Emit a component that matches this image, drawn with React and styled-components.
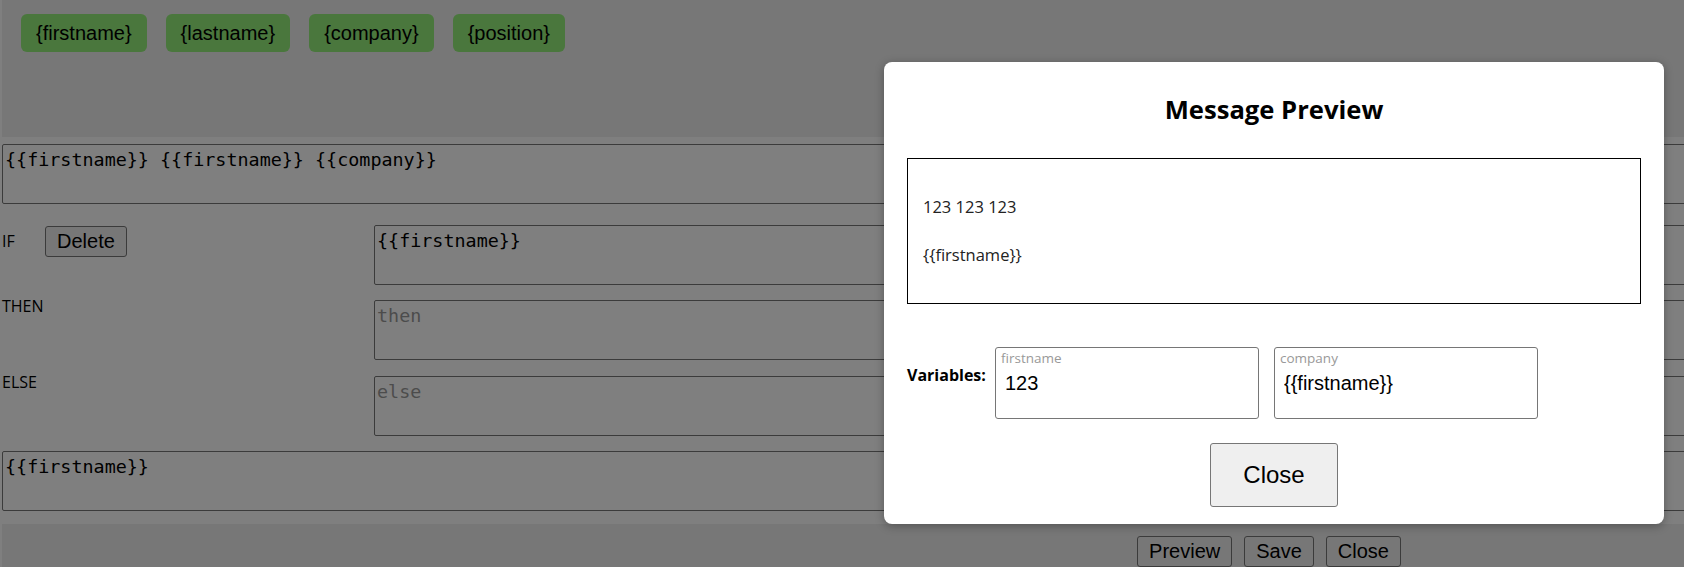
import React from "react";
import styled, { createGlobalStyle } from "styled-components";

const GlobalStyle = createGlobalStyle`
  html, body {
    margin: 0;
    padding: 0;
    overflow: hidden;
    background: #fff;
  }
  body {
    font-family: "Open Sans", "Noto Sans", sans-serif;
    font-size: 16px;
    color: #000;
  }
`;

const tags = ["firstname", "lastname", "company", "position"];

const App = () => {
  return (
    <>
      <GlobalStyle />
      <Page>
        <Header>
          {tags.map((tag) => (
            <Chip key={tag}>{`{${tag}}`}</Chip>
          ))}
        </Header>

        <Editor>
          <Field
            spellCheck={false}
            defaultValue="{{firstname}} {{firstname}} {{company}}"
          />

          <ConditionRow $gap={21}>
            <Side $center>
              <Label>IF</Label>
              <SmallBtn $lift>Delete</SmallBtn>
            </Side>
            <Field spellCheck={false} defaultValue="{{firstname}}" />
          </ConditionRow>

          <ConditionRow $gap={15}>
            <Side>
              <Label>THEN</Label>
            </Side>
            <Field spellCheck={false} placeholder="then" />
          </ConditionRow>

          <ConditionRow $gap={16}>
            <Side>
              <Label>ELSE</Label>
            </Side>
            <Field spellCheck={false} placeholder="else" />
          </ConditionRow>

          <Field
            spellCheck={false}
            defaultValue="{{firstname}}"
            style={{ marginTop: 15 }}
          />
        </Editor>

        <Footer>
          <SmallBtn>Preview</SmallBtn>
          <SmallBtn>Save</SmallBtn>
          <SmallBtn>Close</SmallBtn>
        </Footer>

        <Overlay>
          <Modal>
            <Title>Message Preview</Title>
            <PreviewBox>{"123 123 123\n\n{{firstname}}"}</PreviewBox>
            <VarRow>
              <VarLabel>Variables:</VarLabel>
              <VarField>
                <Caption>firstname</Caption>
                <VarInput spellCheck={false} defaultValue="123" />
              </VarField>
              <VarField>
                <Caption>company</Caption>
                <VarInput spellCheck={false} defaultValue="{{firstname}}" />
              </VarField>
            </VarRow>
            <CloseBtn>Close</CloseBtn>
          </Modal>
        </Overlay>
      </Page>
    </>
  );
};

const Page = styled.div`
  position: relative;
  width: 2546px;
  padding-left: 2px;
`;

const Header = styled.div`
  display: flex;
  align-items: flex-start;
  gap: 19px;
  height: 137px;
  box-sizing: border-box;
  padding: 14px 19px;
  background: #eeeeee;
`;

const Chip = styled.div`
  padding: 7px 15px;
  border-radius: 6px;
  background: #94ee7a;
  font-family: "Liberation Sans", Arial, sans-serif;
  font-size: 20px;
  line-height: 24px;
  color: #000;
`;

const Editor = styled.div`
  padding: 7px 0 13px;
  background: #fff;
`;

const Field = styled.textarea`
  display: block;
  width: 100%;
  height: 60px;
  box-sizing: border-box;
  margin: 0;
  padding: 2px;
  border: 1px solid #767676;
  border-radius: 2px;
  resize: none;
  outline: none;
  font-family: "DejaVu Sans Mono", "Liberation Mono", monospace;
  font-size: 18.4px;
  line-height: 26px;
  color: #000;
  background: #fff;

  &::placeholder {
    color: #999;
  }
`;

const ConditionRow = styled.div`
  display: grid;
  grid-template-columns: 372px 1fr;
  align-items: start;
  margin-top: ${(p) => p.$gap}px;
`;

const Side = styled.div`
  display: flex;
  align-items: ${(p) => (p.$center ? "center" : "flex-start")};
`;

const Label = styled.span`
  width: 43px;
  flex-shrink: 0;
  font-size: 16px;
  line-height: 12px;
`;

const SmallBtn = styled.button`
  margin-top: ${(p) => (p.$lift ? "1px" : "0")};
  padding: 3px 11px;
  border: 1px solid #767676;
  border-radius: 3px;
  background: #efefef;
  font-family: "Liberation Sans", Arial, sans-serif;
  font-size: 20px;
  line-height: 23px;
  color: #000;
`;

const Footer = styled.div`
  display: flex;
  justify-content: center;
  gap: 12px;
  padding: 12px 12px 24px 0;
  background: #eeeeee;
`;

const Overlay = styled.div`
  position: absolute;
  inset: 0;
  display: flex;
  justify-content: center;
  align-items: flex-start;
  padding-top: 62px;
  background: rgba(0, 0, 0, 0.5);
`;

const Modal = styled.div`
  display: flex;
  flex-direction: column;
  width: 780px;
  box-sizing: border-box;
  padding: 32px 23px 17px;
  border-radius: 8px;
  background: #fff;
  box-shadow: 0 2px 10px rgba(0, 0, 0, 0.3);
`;

const Title = styled.h2`
  margin: 0;
  text-align: center;
  font-size: 25.6px;
  font-weight: 700;
  line-height: 32px;
`;

const PreviewBox = styled.div`
  margin-top: 32px;
  padding: 36px 15px;
  border: 1px solid #000;
  white-space: pre-wrap;
  font-size: 16.5px;
  line-height: 24px;
  color: #222;
`;

const VarRow = styled.div`
  display: flex;
  align-items: center;
  margin-top: 43px;
`;

const VarLabel = styled.span`
  width: 88px;
  margin-bottom: 16px;
  font-size: 16px;
  font-weight: 700;
`;

const VarField = styled.label`
  display: flex;
  flex-direction: column;
  width: 264px;
  height: 72px;
  box-sizing: border-box;
  margin-right: 15px;
  padding: 2px 5px;
  border: 1px solid #767676;
  border-radius: 3px;
`;

const Caption = styled.span`
  font-size: 13.5px;
  line-height: 16px;
  color: #999;
`;

const VarInput = styled.input`
  margin-top: 5px;
  padding: 0 0 0 4px;
  border: none;
  outline: none;
  font-family: "Liberation Sans", Arial, sans-serif;
  font-size: 20px;
  line-height: 24px;
  height: 24px;
  color: #000;
  background: transparent;
`;

const CloseBtn = styled.button`
  align-self: center;
  margin-top: 24px;
  padding: 17px 32px;
  border: 1px solid #767676;
  border-radius: 3px;
  background: #efefef;
  font-family: "Liberation Sans", Arial, sans-serif;
  font-size: 24px;
  line-height: 28px;
  color: #000;
`;

export default App;
